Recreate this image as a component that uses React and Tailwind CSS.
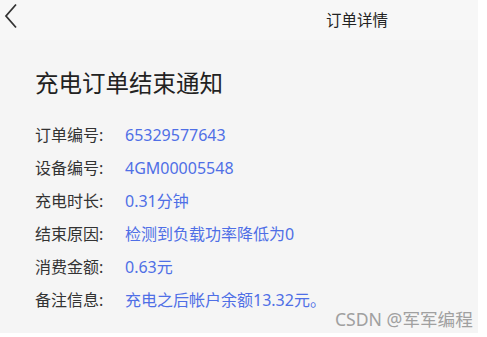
export default function App() {
  const rows = [
    ["订单编号:", "65329577643"],
    ["设备编号:", "4GM00005548"],
    ["充电时长:", "0.31分钟"],
    ["结束原因:", "检测到负载功率降低为0"],
    ["消费金额:", "0.63元"],
    ["备注信息:", "充电之后帐户余额13.32元。"],
  ];
  return (
    <div
      className="relative w-[487px] h-[337px] bg-white overflow-hidden"
      style={{ fontFamily: '"Noto Sans", "Noto Sans CJK SC", sans-serif' }}
    >
      <div className="w-[478px] h-[333px] bg-[#f5f5f5] flex flex-col">
        <div className="h-[40px] bg-[#f7f7f7] flex items-start">
          <svg className="ml-[4px] mt-[3px]" width="14" height="26" viewBox="0 0 14 26" fill="none">
            <polyline points="12,1.5 2,13 12,24.5" stroke="#333" strokeWidth="1.8" />
          </svg>
          <div className="ml-auto mr-[90px] mt-[8px] text-[15.5px] leading-[24px] text-[#222]">订单详情</div>
        </div>
        <div className="pl-[35px]">
          <div className="mt-[27px] text-[23.5px] leading-[32px] text-[#222]">充电订单结束通知</div>
          <div className="mt-[19px] flex flex-col">
            {rows.map(([k, v]) => (
              <div key={k} className="flex h-[33px] items-center text-[16px]">
                <span className="w-[90px] text-[#333]">{k}</span>
                <span className="text-[#4f6fe6]">{v}</span>
              </div>
            ))}
          </div>
        </div>
      </div>
      <div className="absolute left-[335px] top-[307px] text-[17.6px] leading-[24px] text-[#a0a0a0]">CSDN @军军编程</div>
    </div>
  );
}
